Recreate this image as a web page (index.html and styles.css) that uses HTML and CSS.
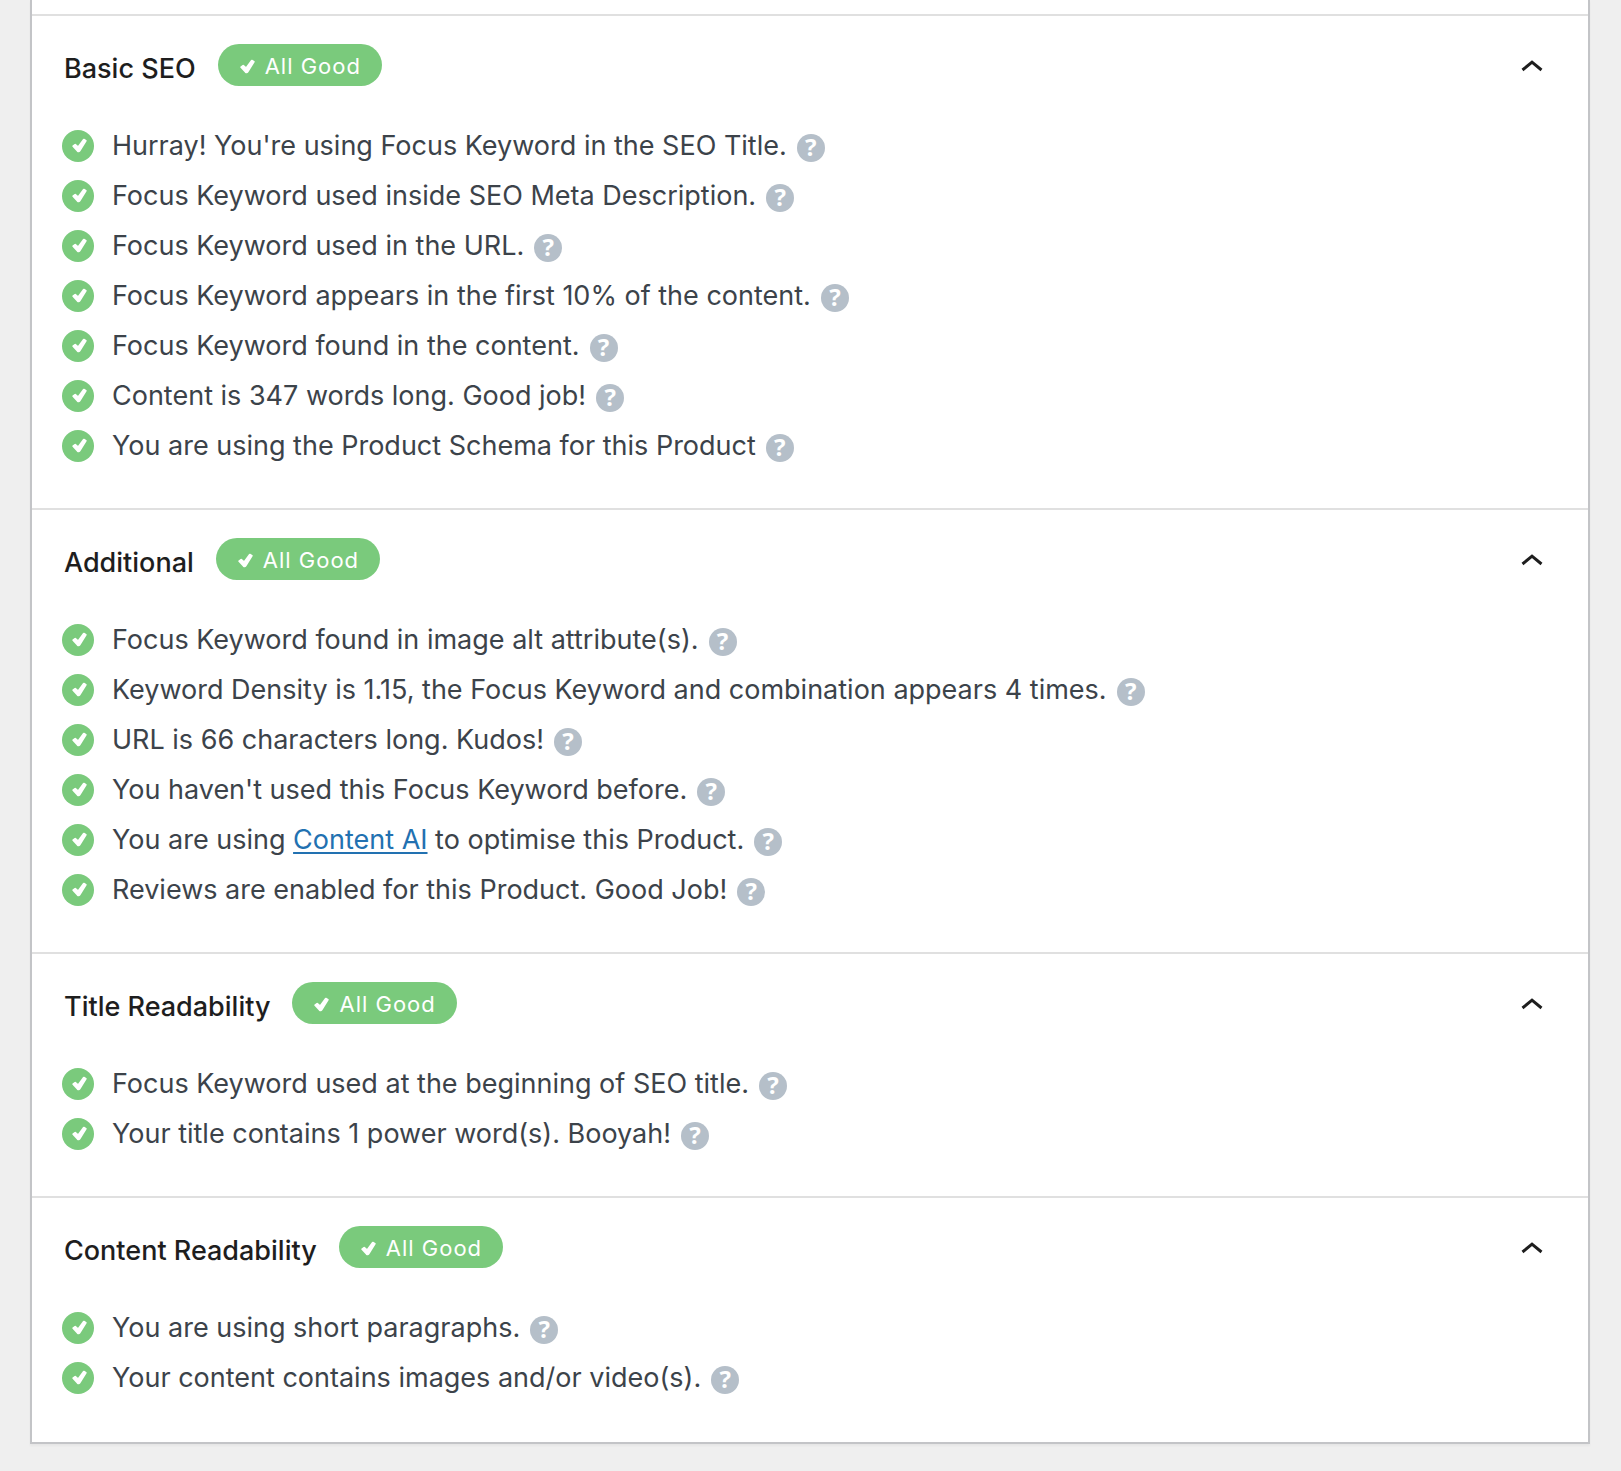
FILE: index.html
```
<!DOCTYPE html>
<html lang="en">
<head>
<meta charset="utf-8">
<title>SEO Checks</title>
<link rel="stylesheet" href="styles.css">
</head>
<body>

<svg class="sprite" aria-hidden="true">
  <symbol id="tick" viewBox="0 0 32 32"><path d="M11.2 16.2L13.2 14.6L16.1 17.2L21.8 9.6L23.8 10.8L17.6 20.8Q16.7 22 15.6 21Z" fill="#fff" stroke="#fff" stroke-width="1.8" stroke-linejoin="round"/></symbol>
  <symbol id="tick-small" viewBox="10 8 15 15"><path d="M11.2 16.2L13.2 14.6L16.1 17.2L21.8 9.6L23.8 10.8L17.6 20.8Q16.7 22 15.6 21Z" fill="#fff" stroke="#fff" stroke-width="1.8" stroke-linejoin="round"/></symbol>
  <symbol id="chevron" viewBox="0 0 22 44"><path d="M1.5 26L11 18.2L20.5 26" fill="none" stroke="#1e1e1e" stroke-width="3"/></symbol>
</svg>

<div class="panel">
  <section class="group">
    <h2><button class="group-toggle" aria-expanded="true">
      <span class="group-title">Basic SEO</span>
      <span class="badge"><svg><use href="#tick-small"/></svg>All Good</span>
      <svg class="chevron"><use href="#chevron"/></svg>
    </button></h2>
    <ul class="checks">
      <li><svg class="tick"><use href="#tick"/></svg><span>Hurray! You're using Focus Keyword in the SEO Title.</span><a class="help" href="#">?</a></li>
      <li><svg class="tick"><use href="#tick"/></svg><span>Focus Keyword used inside SEO Meta Description.</span><a class="help" href="#">?</a></li>
      <li><svg class="tick"><use href="#tick"/></svg><span>Focus Keyword used in the URL.</span><a class="help" href="#">?</a></li>
      <li><svg class="tick"><use href="#tick"/></svg><span>Focus Keyword appears in the first 10% of the content.</span><a class="help" href="#">?</a></li>
      <li><svg class="tick"><use href="#tick"/></svg><span>Focus Keyword found in the content.</span><a class="help" href="#">?</a></li>
      <li><svg class="tick"><use href="#tick"/></svg><span>Content is 347 words long. Good job!</span><a class="help" href="#">?</a></li>
      <li><svg class="tick"><use href="#tick"/></svg><span>You are using the Product Schema for this Product</span><a class="help" href="#">?</a></li>
    </ul>
  </section>

  <section class="group">
    <h2><button class="group-toggle" aria-expanded="true">
      <span class="group-title">Additional</span>
      <span class="badge"><svg><use href="#tick-small"/></svg>All Good</span>
      <svg class="chevron"><use href="#chevron"/></svg>
    </button></h2>
    <ul class="checks">
      <li><svg class="tick"><use href="#tick"/></svg><span>Focus Keyword found in image alt attribute(s).</span><a class="help" href="#">?</a></li>
      <li><svg class="tick"><use href="#tick"/></svg><span>Keyword Density is 1.15, the Focus Keyword and combination appears 4 times.</span><a class="help" href="#">?</a></li>
      <li><svg class="tick"><use href="#tick"/></svg><span>URL is 66 characters long. Kudos!</span><a class="help" href="#">?</a></li>
      <li><svg class="tick"><use href="#tick"/></svg><span>You haven't used this Focus Keyword before.</span><a class="help" href="#">?</a></li>
      <li><svg class="tick"><use href="#tick"/></svg><span>You are using <a class="link" href="#">Content AI</a> to optimise this Product.</span><a class="help" href="#">?</a></li>
      <li><svg class="tick"><use href="#tick"/></svg><span>Reviews are enabled for this Product. Good Job!</span><a class="help" href="#">?</a></li>
    </ul>
  </section>

  <section class="group">
    <h2><button class="group-toggle" aria-expanded="true">
      <span class="group-title">Title Readability</span>
      <span class="badge"><svg><use href="#tick-small"/></svg>All Good</span>
      <svg class="chevron"><use href="#chevron"/></svg>
    </button></h2>
    <ul class="checks">
      <li><svg class="tick"><use href="#tick"/></svg><span>Focus Keyword used at the beginning of SEO title.</span><a class="help" href="#">?</a></li>
      <li><svg class="tick"><use href="#tick"/></svg><span>Your title contains 1 power word(s). Booyah!</span><a class="help" href="#">?</a></li>
    </ul>
  </section>

  <section class="group">
    <h2><button class="group-toggle" aria-expanded="true">
      <span class="group-title">Content Readability</span>
      <span class="badge"><svg><use href="#tick-small"/></svg>All Good</span>
      <svg class="chevron"><use href="#chevron"/></svg>
    </button></h2>
    <ul class="checks">
      <li><svg class="tick"><use href="#tick"/></svg><span>You are using short paragraphs.</span><a class="help" href="#">?</a></li>
      <li><svg class="tick"><use href="#tick"/></svg><span>Your content contains images and/or video(s).</span><a class="help" href="#">?</a></li>
    </ul>
  </section>
</div>

</body>
</html>
```
FILE: styles.css
```
body {
  margin: 0;
  background-color: #efefef;
  color: #3c434a;
  font-family: Inter, sans-serif;
  font-size: 27px;
}

.sprite {
  position: absolute;
  width: 0;
  height: 0;
}

.panel {
  margin: 0 31px 27px 30px;
  padding-top: 14px;
  border: 2px solid #c3c4c7;
  border-top: none;
  background-color: #fff;
  box-shadow: 0 2px 2px rgba(0, 0, 0, 0.04);
}

.group {
  border-top: 2px solid #e0e0e0;
}

.group h2 {
  margin: 0;
}

.group-toggle {
  display: flex;
  align-items: flex-start;
  width: 100%;
  padding: 28px 45px 22px 32px;
  border: none;
  background: none;
  color: #1e1e1e;
  font-family: inherit;
  font-size: 27px;
  font-weight: 500;
  line-height: 50px;
  text-align: left;
  cursor: pointer;
}

.badge {
  display: flex;
  align-items: center;
  gap: 10px;
  margin-left: 22px;
  padding: 2px 21px 0 22px;
  border-radius: 21px;
  background-color: #7aca7c;
  color: #fff;
  font-size: 22px;
  font-weight: 400;
  letter-spacing: 1px;
  line-height: 40px;
}

.badge svg {
  width: 15px;
  height: 15px;
}

.chevron {
  width: 22px;
  height: 44px;
  margin-left: auto;
}

.checks {
  margin: 0;
  padding: 5px 30px 37px;
  list-style: none;
}

.group:last-child .checks {
  padding-bottom: 39px;
}

.checks li {
  display: flex;
  align-items: center;
  line-height: 50px;
}

.tick {
  width: 32px;
  height: 32px;
  margin-right: 18px;
  border-radius: 50%;
  background-color: #7aca7c;
}

.link {
  color: #2271b1;
  text-decoration-thickness: 2px;
  text-underline-offset: 3px;
}

.help {
  width: 28px;
  height: 28px;
  margin: 4px 0 0 10px;
  border-radius: 50%;
  background-color: #b5bfc9;
  color: #fff;
  font-family: "Noto Sans", sans-serif;
  font-size: 24px;
  font-weight: 700;
  line-height: 26px;
  text-align: center;
  text-decoration: none;
}
```
